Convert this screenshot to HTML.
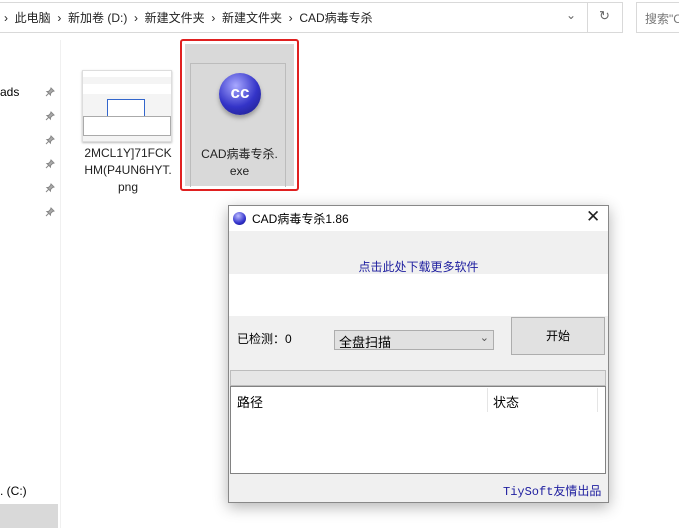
<!DOCTYPE html>
<html><head><meta charset="utf-8"><style>
*{margin:0;padding:0;box-sizing:border-box}
body{width:679px;height:528px;overflow:hidden;background:#fff;font-family:"Liberation Sans","Noto Sans CJK SC",sans-serif;font-size:12px;color:#000;position:relative}
.a{position:absolute}
.pin{position:absolute;left:45px;width:10px;height:10px}
</style></head><body>
<div class="a" style="left:-1px;top:2px;width:624px;height:31px;border:1px solid #d9d9d9"></div>
<div class="a" style="left:587px;top:2px;width:1px;height:31px;background:#d9d9d9"></div>
<div class="a" style="left:636px;top:2px;width:60px;height:31px;border:1px solid #d9d9d9"></div>
<div class="a" style="left:4px;top:9px;font-size:12px;color:#222;white-space:nowrap">›&nbsp; 此电脑 &nbsp;›&nbsp; 新加卷 (D:) &nbsp;›&nbsp; 新建文件夹 &nbsp;›&nbsp; 新建文件夹 &nbsp;›&nbsp; CAD病毒专杀</div>
<div class="a" style="left:566px;top:8px;color:#666;font-size:12px">⌄</div>
<div class="a" style="left:599px;top:8px;color:#666;font-size:13px">↻</div>
<div class="a" style="left:645px;top:10px;color:#777;font-size:12px;white-space:nowrap">搜索"C</div>
<div class="a" style="left:60px;top:40px;width:1px;height:488px;background:#f0f0f0"></div>
<div class="a" style="left:0;top:85px">ads</div>
<svg class="pin" style="top:87px" viewBox="0 0 10 10"><path d="M6 1 L9 4 L7.5 4.5 L5.5 6.5 L5.5 8 L2 4.5 L3.5 4.5 L5.5 2.5 Z M3.5 6.5 L1 9" stroke="#888" fill="#aaa" stroke-width="1"/></svg>
<svg class="pin" style="top:111px" viewBox="0 0 10 10"><path d="M6 1 L9 4 L7.5 4.5 L5.5 6.5 L5.5 8 L2 4.5 L3.5 4.5 L5.5 2.5 Z M3.5 6.5 L1 9" stroke="#888" fill="#aaa" stroke-width="1"/></svg>
<svg class="pin" style="top:135px" viewBox="0 0 10 10"><path d="M6 1 L9 4 L7.5 4.5 L5.5 6.5 L5.5 8 L2 4.5 L3.5 4.5 L5.5 2.5 Z M3.5 6.5 L1 9" stroke="#888" fill="#aaa" stroke-width="1"/></svg>
<svg class="pin" style="top:159px" viewBox="0 0 10 10"><path d="M6 1 L9 4 L7.5 4.5 L5.5 6.5 L5.5 8 L2 4.5 L3.5 4.5 L5.5 2.5 Z M3.5 6.5 L1 9" stroke="#888" fill="#aaa" stroke-width="1"/></svg>
<svg class="pin" style="top:183px" viewBox="0 0 10 10"><path d="M6 1 L9 4 L7.5 4.5 L5.5 6.5 L5.5 8 L2 4.5 L3.5 4.5 L5.5 2.5 Z M3.5 6.5 L1 9" stroke="#888" fill="#aaa" stroke-width="1"/></svg>
<svg class="pin" style="top:207px" viewBox="0 0 10 10"><path d="M6 1 L9 4 L7.5 4.5 L5.5 6.5 L5.5 8 L2 4.5 L3.5 4.5 L5.5 2.5 Z M3.5 6.5 L1 9" stroke="#888" fill="#aaa" stroke-width="1"/></svg>
<div class="a" style="left:0;top:484px;font-size:12px">. (C:)</div>
<div class="a" style="left:0;top:504px;width:58px;height:24px;background:#d9d9d9"></div>
<div class="a" style="left:82px;top:70px;width:90px;height:72px;background:#f4f4f4;border:1px solid #ddd;box-shadow:0 1px 2px #bbb"></div>
<div class="a" style="left:83px;top:71px;width:88px;height:6px;background:#fff"></div>
<div class="a" style="left:83px;top:84px;width:88px;height:10px;background:#fff"></div>
<div class="a" style="left:107px;top:99px;width:38px;height:20px;background:#fff;border:1px solid #36c"></div>
<div class="a" style="left:83px;top:116px;width:88px;height:20px;background:#fff;border:1px solid #aaa"></div>
<div class="a" style="left:80px;top:145px;width:96px;text-align:center;font-size:12px;line-height:17px;color:#222">2MCL1Y]71FCK<br>HM(P4UN6HYT.<br>png</div>
<div class="a" style="left:180px;top:39px;width:119px;height:152px;border:2px solid #e02020;border-radius:3px"></div>
<div class="a" style="left:185px;top:44px;width:109px;height:142px;background:#d9d9d9"></div>
<div class="a" style="left:190px;top:63px;width:96px;height:124px;border:1px solid #bcbcbc;border-bottom:none"></div>
<div class="a" style="left:219px;top:73px;width:42px;height:42px;border-radius:50%;background:radial-gradient(circle at 40% 30%,#a8a8ff,#3434c8 55%,#1a1a80);box-shadow:0 3px 4px #999;color:#fff;font-weight:bold;font-size:17px;text-align:center;line-height:40px">cc</div>
<div class="a" style="left:185px;top:146px;width:109px;text-align:center;font-size:12px;line-height:17px;color:#222">CAD病毒专杀.<br>exe</div>
<div class="a" style="left:228px;top:205px;width:381px;height:298px;background:#f0f0f0;border:1px solid #888;box-shadow:0 4px 14px rgba(0,0,0,.3)"></div>
<div class="a" style="left:229px;top:206px;width:379px;height:25px;background:#fff"></div>
<div class="a" style="left:233px;top:212px;width:13px;height:13px;border-radius:50%;background:radial-gradient(circle at 40% 30%,#bbf,#33c 60%,#117)"></div>
<div class="a" style="left:252px;top:210px;font-size:12px">CAD病毒专杀1.86</div>
<div class="a" style="left:586px;top:207px;font-size:17px;color:#222">✕</div>
<div class="a" style="left:229px;top:274px;width:379px;height:42px;background:#fff"></div>
<div class="a" style="left:229px;top:258px;width:379px;text-align:center;font-size:12px;color:#2020a0">点击此处下载更多软件</div>
<div class="a" style="left:237px;top:330px;font-size:12px">已检测：0</div>
<div class="a" style="left:334px;top:330px;width:160px;height:20px;background:#e1e1e1;border:1px solid #adadad;padding:1px 4px;font-size:13px">全盘扫描<span style="position:absolute;right:4px;top:0;color:#555;font-size:11px">⌄</span></div>
<div class="a" style="left:511px;top:317px;width:94px;height:38px;background:#e1e1e1;border:1px solid #adadad;text-align:center;line-height:36px;font-size:12px">开始</div>
<div class="a" style="left:230px;top:370px;width:376px;height:16px;background:#e6e6e6;border:1px solid #bcbcbc"></div>
<div class="a" style="left:230px;top:386px;width:376px;height:88px;background:#fff;border:1px solid #828282"></div>
<div class="a" style="left:487px;top:388px;width:1px;height:24px;background:#e5e5e5"></div>
<div class="a" style="left:597px;top:388px;width:1px;height:24px;background:#e5e5e5"></div>
<div class="a" style="left:237px;top:392px;font-size:13px">路径</div>
<div class="a" style="left:493px;top:392px;font-size:13px">状态</div>
<div class="a" style="left:503px;top:482px;font-size:12px;color:#2020a0;font-family:'Liberation Mono','Noto Sans CJK SC',monospace">TiySoft友情出品</div>
</body></html>
